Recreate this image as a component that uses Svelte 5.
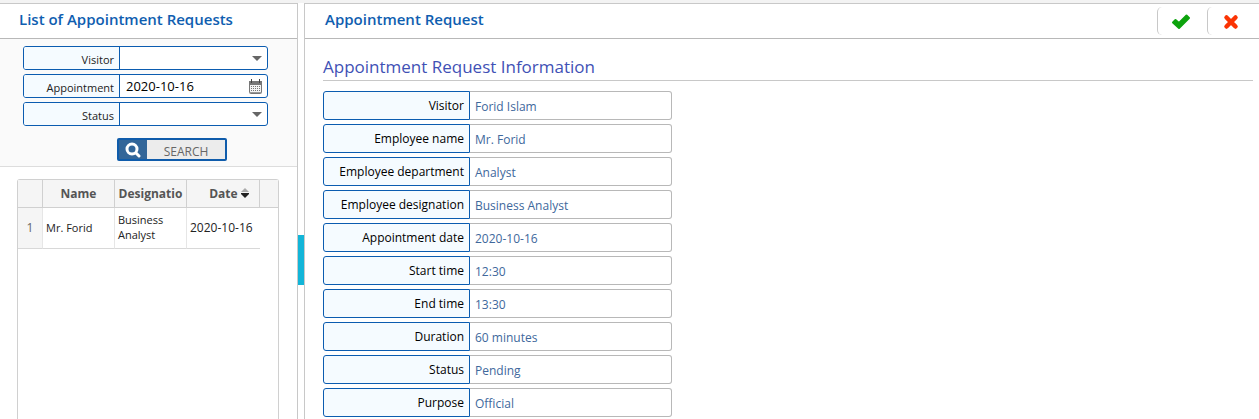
<script lang="ts">
  let visitor = $state('');
  let appointment = $state('2020-10-16');
  let status = $state('');

  const requests = [
    { id: 1, name: 'Mr. Forid', designation: 'Business Analyst', date: '2020-10-16' },
  ];

  const details = [
    { label: 'Visitor', value: 'Forid Islam' },
    { label: 'Employee name', value: 'Mr. Forid' },
    { label: 'Employee department', value: 'Analyst' },
    { label: 'Employee designation', value: 'Business Analyst' },
    { label: 'Appointment date', value: '2020-10-16' },
    { label: 'Start time', value: '12:30' },
    { label: 'End time', value: '13:30' },
    { label: 'Duration', value: '60 minutes' },
    { label: 'Status', value: 'Pending' },
    { label: 'Purpose', value: 'Official' },
  ];
</script>

<div class="page">
  <section class="list-panel">
    <header class="panel-header">
      <h2>List of Appointment Requests</h2>
    </header>

    <form class="search-form" onsubmit={(e) => e.preventDefault()}>
      <div class="field">
        <label for="visitor">Visitor</label>
        <div class="control">
          <select id="visitor" bind:value={visitor}>
            <option value=""></option>
            <option value="Forid Islam">Forid Islam</option>
          </select>
          <svg class="arrow" viewBox="0 0 10 5" aria-hidden="true"><path d="M0 0h10L5 5z" /></svg>
        </div>
      </div>
      <div class="field">
        <label for="appointment">Appointment</label>
        <div class="control">
          <input id="appointment" type="text" bind:value={appointment} />
          <svg class="calendar" viewBox="0 0 13 15" aria-hidden="true">
            <rect x="0.5" y="2.5" width="12" height="12" rx="1" fill="#f4f4f4" stroke="#777" />
            <path d="M0 2h13v4H0z" fill="#777" />
            <path d="M2.5 0v4M10.5 0v4" stroke="#444" stroke-width="1" />
            <path
              d="M2 7.5h9M2 9.5h9M2 11.5h9"
              stroke="#777"
              stroke-width="1"
              stroke-dasharray="1 1"
            />
            <path d="M1 13.5h11" stroke="#999" />
          </svg>
        </div>
      </div>
      <div class="field">
        <label for="status">Status</label>
        <div class="control">
          <select id="status" bind:value={status}>
            <option value=""></option>
            <option value="Pending">Pending</option>
          </select>
          <svg class="arrow" viewBox="0 0 10 5" aria-hidden="true"><path d="M0 0h10L5 5z" /></svg>
        </div>
      </div>
      <button class="search-button" type="submit">
        <span class="search-icon">
          <svg viewBox="0 0 16 16" aria-hidden="true">
            <circle cx="7" cy="7" r="5" fill="none" stroke="#fff" stroke-width="3" />
            <path d="M11 11l3 3" stroke="#fff" stroke-width="3" stroke-linecap="round" />
          </svg>
        </span>
        <span class="search-text">SEARCH</span>
      </button>
    </form>

    <div class="grid">
      <table>
        <colgroup>
          <col class="col-index" />
          <col class="col-data" />
          <col class="col-data" />
          <col class="col-date" />
          <col />
        </colgroup>
        <thead>
          <tr>
            <th></th>
            <th>Name</th>
            <th>Designatio</th>
            <th class="sorted">
              Date
              <svg viewBox="0 0 8 10" aria-hidden="true">
                <path d="M0 4l4-4 4 4z" fill="#aaa" />
                <path d="M0 5h8v1L4 10 0 6z" fill="#222" />
              </svg>
            </th>
            <th></th>
          </tr>
        </thead>
        <tbody>
          {#each requests as request (request.id)}
            <tr>
              <td class="index">{request.id}</td>
              <td>{request.name}</td>
              <td>{request.designation}</td>
              <td class="date">{request.date}</td>
              <td class="filler"></td>
            </tr>
          {/each}
        </tbody>
      </table>
    </div>
  </section>

  <div class="splitter">
    <button type="button" aria-label="Collapse list"></button>
  </div>

  <section class="detail-panel">
    <header class="panel-header">
      <h2>Appointment Request</h2>
      <div class="actions">
        <button type="button" aria-label="Approve">
          <svg viewBox="0 0 20 16" aria-hidden="true">
            <path
              d="M2 8.5l6 5.5L18 4l-2.500-2.500L8 9 4.500 6z"
              fill="#0da30d"
              stroke="#0da30d"
              stroke-width="2"
              stroke-linejoin="round"
            />
          </svg>
        </button>
        <button type="button" aria-label="Reject">
          <svg viewBox="0 0 20 16" aria-hidden="true">
            <path
              d="M5.500 3.500l9 9M14.500 3.500l-9 9"
              fill="none"
              stroke="#fb3404"
              stroke-width="4.500"
              stroke-linecap="round"
            />
          </svg>
        </button>
      </div>
    </header>

    <div class="detail-body">
      <h3>Appointment Request Information</h3>
      <dl>
        {#each details as detail}
          <div class="detail-row">
            <dt>{detail.label}</dt>
            <dd>{detail.value}</dd>
          </div>
        {/each}
      </dl>
    </div>
  </section>
</div>

<style>
  :global(body) {
    background: #fff;
  }
  .page {
    display: flex;
    box-sizing: border-box;
    min-height: 100vh;
    border-top: 3px solid #f3f3f3;
    font-family: "Open Sans", "Noto Sans", sans-serif;
    font-size: 12px;
    color: #222;
  }
  .page * {
    box-sizing: border-box;
  }
  h2, h3, dl, dd {
    margin: 0;
  }
  button, input, select {
    font: inherit;
  }
  .list-panel {
    display: flex;
    flex: none;
    flex-direction: column;
    width: 298px;
    border-right: 1px solid #c8c8c8;
  }
  .panel-header {
    display: flex;
    align-items: center;
    justify-content: space-between;
    height: 36px;
    padding-left: 19px;
    border-top: 1px solid #c8c8c8;
    border-bottom: 1px solid #b8b8b8;
  }
  h2 {
    padding-bottom: 4px;
    font-size: 15px;
    font-weight: 600;
    line-height: 20px;
    color: #0f5eb0;
  }

  /* search form */
  .search-form {
    display: flex;
    flex-direction: column;
    gap: 4px;
    padding: 7px 29px 5px 23px;
    border-bottom: 1px solid #ddd;
    background: #fafafa;
  }
  .field {
    display: flex;
    height: 24px;
    border: 1px solid #0b5cb0;
    border-radius: 3px;
    background: #fff;
    overflow: hidden;
  }
  .field label {
    width: 96px;
    padding: 3px 5px 0 0;
    border-right: 1px solid #0b5cb0;
    background: #f5fbff;
    font-size: 11px;
    line-height: 20px;
    text-align: right;
  }
  .control {
    position: relative;
    flex: 1;
    min-width: 0;
  }
  .control input, .control select {
    display: block;
    width: 100%;
    height: 100%;
    padding: 0 24px 0 6px;
    border: 0;
    outline: 0;
    appearance: none;
    background: transparent;
    color: #000;
    font-size: 13px;
  }
  .control svg {
    position: absolute;
    pointer-events: none;
  }
  .arrow {
    top: 9px;
    right: 5px;
    width: 10px;
    height: 5px;
    fill: #666;
  }
  .calendar {
    top: 4px;
    right: 5px;
    width: 13px;
    height: 15px;
  }
  .search-button {
    display: flex;
    align-self: flex-end;
    width: 110px;
    height: 23px;
    margin: 8px 41px 0 0;
    padding: 0;
    border: 2px solid #0f5cab;
    border-radius: 2px;
    background: #ececec;
    color: #666;
    cursor: pointer;
  }
  .search-icon {
    display: flex;
    align-items: center;
    justify-content: center;
    width: 28px;
    height: 100%;
    background: #336699;
  }
  .search-icon svg {
    width: 16px;
    height: 16px;
  }
  .search-text {
    flex: 1;
    padding-top: 2px;
    line-height: 19px;
  }

  /* request grid */
  .grid {
    flex: 1;
    margin: 12px 18px 0 17px;
    border: 1px solid #d0d0d0;
    border-bottom: 0;
    border-radius: 3px 3px 0 0;
  }
  table {
    width: 100%;
    border-collapse: separate;
    border-spacing: 0;
    table-layout: fixed;
  }
  .col-index {
    width: 25px;
  }
  .col-data {
    width: 72px;
  }
  .col-date {
    width: 73px;
  }
  th {
    height: 28px;
    padding: 0;
    border-right: 1px solid #d0d0d0;
    border-bottom: 1px solid #d0d0d0;
    background: #f5f5f5;
    color: #555;
    font-size: 12px;
    font-weight: 700;
    white-space: nowrap;
    overflow: hidden;
  }
  th:last-child {
    border-right: 0;
  }
  .sorted {
    padding-left: 12px;
  }
  .sorted svg {
    width: 8px;
    height: 10px;
  }
  td {
    height: 41px;
    padding: 0 3px 2px;
    border-right: 1px solid #e6e6e6;
    border-bottom: 1px solid #d8d8d8;
    font-size: 11px;
    line-height: 15px;
  }
  .date {
    border-right: 0;
    font-size: 12px;
    white-space: nowrap;
  }
  .index {
    background: #f5f5f5;
    color: #666;
    font-size: 12px;
    text-align: center;
  }
  .filler {
    border: 0;
  }

  .splitter {
    flex: none;
    width: 6px;
  }
  .splitter button {
    display: block;
    width: 100%;
    height: 50px;
    margin-top: 232px;
    padding: 0;
    border: 0;
    background: #12b5d8;
    cursor: pointer;
  }

  /* request details */
  .detail-panel {
    flex: 1;
    min-width: 0;
    border-left: 1px solid #c8c8c8;
  }
  .detail-panel .panel-header {
    padding-left: 20px;
  }
  .actions {
    display: flex;
    padding-right: 2px;
  }
  .actions button {
    display: flex;
    align-items: center;
    justify-content: center;
    width: 50px;
    height: 28px;
    padding: 2px 4px 0 0;
    border: 0;
    border-left: 1px solid #c8c8c8;
    border-radius: 5px;
    background: transparent;
    cursor: pointer;
  }
  .actions svg {
    width: 20px;
    height: 16px;
  }
  .detail-body {
    padding: 15px 6px 2px 18px;
  }
  h3 {
    border-bottom: 1px solid #c8c8c8;
    font-size: 17px;
    font-weight: 400;
    line-height: 26px;
    color: #3f51b5;
  }
  dl {
    display: flex;
    flex-direction: column;
    gap: 4px;
    max-width: 349px;
    padding-top: 10px;
  }
  .detail-row {
    display: flex;
    height: 29px;
    line-height: 27px;
  }
  dt {
    width: 147px;
    padding-right: 5px;
    border: 1px solid #0b5cb0;
    border-radius: 3px 0 0 3px;
    background: #f5fbff;
    color: #000;
    text-align: right;
  }
  dd {
    flex: 1;
    padding: 1px 0 0 5px;
    border: 1px solid #b8b8b8;
    border-left: 0;
    border-radius: 0 3px 3px 0;
    color: #40689c;
  }
</style>
